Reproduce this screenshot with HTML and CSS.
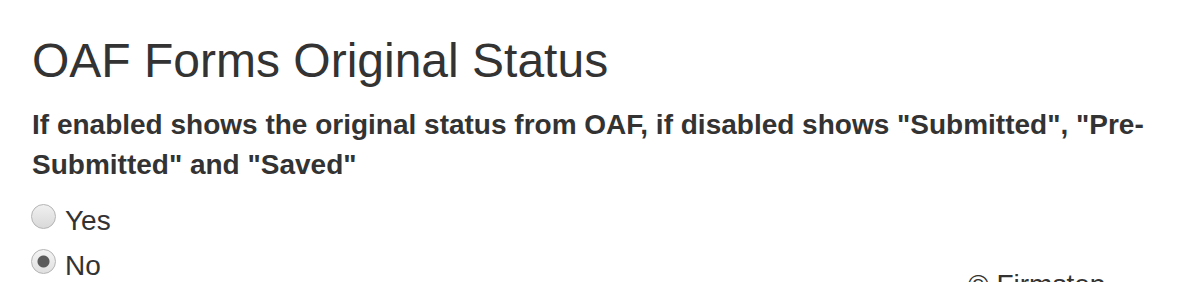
FILE: index.html
```html
<!DOCTYPE html>
<html>
<head>
<meta charset="utf-8">
<link rel="stylesheet" href="styles.css">
</head>
<body>
<div class="page">
  <h1 class="title">OAF Forms Original Status</h1>
  <p class="desc">If enabled shows the original status from OAF, if disabled shows "Submitted", "Pre-Submitted" and "Saved"</p>
  <div class="bottom">
    <div class="radios">
      <label class="radio-row"><input type="radio" name="status" class="radio"><span>Yes</span></label>
      <label class="radio-row"><input type="radio" name="status" class="radio" checked><span>No</span></label>
    </div>
    <div class="footer">© Firmstep</div>
  </div>
</div>
</body>
</html>
```
FILE: styles.css
```css
html, body {
  margin: 0;
  padding: 0;
  background: #fff;
}
body {
  font-family: "Liberation Sans", Arial, sans-serif;
  color: #333;
}
.page {
  padding: 0 0 0 32px;
}
.title {
  margin: 34px 0 0 0;
  font-size: 48px;
  line-height: 53px;
  font-weight: normal;
  color: #333;
}
.desc {
  margin: 18px 0 0 0;
  width: 1120px;
  font-size: 28px;
  line-height: 40px;
  font-weight: bold;
  color: #333;
}
.bottom {
  display: grid;
  grid-template-columns: 936px 1fr;
  margin-top: 19px;
}
.radios {
  display: flex;
  flex-direction: column;
  gap: 11px;
}
.radio-row {
  display: flex;
  align-items: center;
  height: 34px;
  font-size: 28px;
  line-height: 34px;
}
.radio {
  appearance: none;
  -webkit-appearance: none;
  width: 25px;
  height: 25px;
  margin: 0 9px 9px -1px;
  border: 1px solid #b4b4b4;
  border-radius: 50%;
  box-sizing: border-box;
  background: linear-gradient(#f0f0f0, #d9d9d9);
}
.radio:checked {
  background: radial-gradient(circle, #5c5c5c 0, #5c5c5c 5.5px, transparent 6.5px), linear-gradient(#f4f4f4, #e0e0e0);
}
.footer {
  padding-top: 64px;
  font-size: 28px;
  line-height: 34px;
  color: #333;
}
```
